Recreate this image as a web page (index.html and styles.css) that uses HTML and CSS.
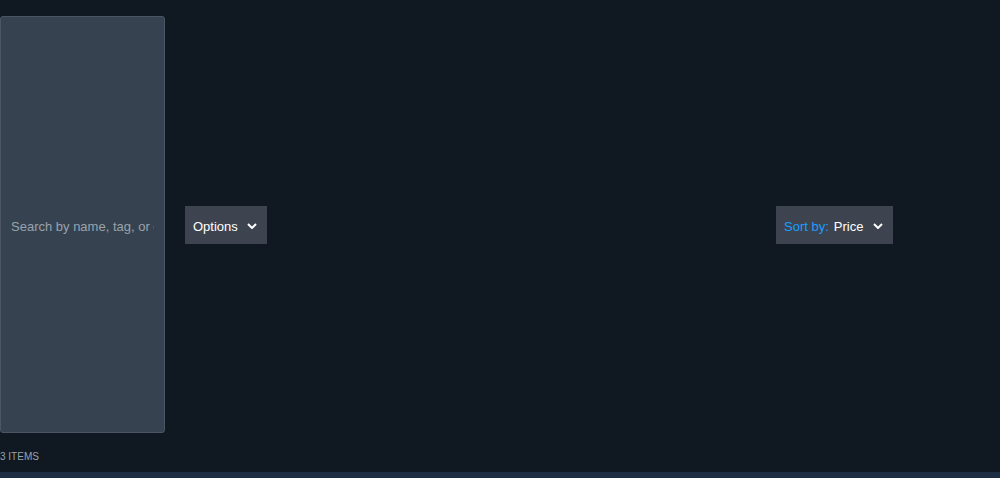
FILE: index.html
```html
<!DOCTYPE html>
<html lang="en">
<head>
    <meta charset="UTF-8">
    <title>Inventory</title>
    <link rel="stylesheet" href="styles.css">
</head>
<body>

<div class="page">
    <!-- Filtros -->
    <div class="toolbar">
        <input type="text" class="search" placeholder="Search by name, tag, or description">
        <button class="dropdown options">
            Options
            <svg class="chevron" viewBox="0 0 10 6" width="10" height="6"><path d="M1 1 L5 5 L9 1" fill="none" stroke="#fff" stroke-width="2"/></svg>
        </button>
        <div class="spacer"></div>
        <button class="dropdown sort">
            <span class="sort-label">Sort by:</span> Price
            <svg class="chevron" viewBox="0 0 10 6" width="10" height="6"><path d="M1 1 L5 5 L9 1" fill="none" stroke="#fff" stroke-width="2"/></svg>
        </button>
    </div>

    <div class="count">3 ITEMS</div>
</div>

<div class="footer-bar"></div>

</body>
</html>
```

FILE: styles.css
```css
html, body {
    height: 100%;
}
body {
    margin: 0;
    background-color: #101822;
    font-family: "Liberation Sans", Arial, sans-serif;
    display: flex;
    flex-direction: column;
    overflow: hidden;
}
.page {
    flex: 1;
    padding-top: 16px;
}
.toolbar {
    display: flex;
    align-items: center;
    height: 417px;
    padding-right: 107px;
}
.search {
    align-self: stretch;
    width: 165px;
    box-sizing: border-box;
    margin: 0;
    padding: 3px 10px 0;
    background-color: #36424f;
    border: 1px solid #4b5665;
    border-radius: 3px;
    color: #c6d4df;
    font-family: inherit;
    font-size: 13px;
    outline: none;
}
.search::placeholder {
    color: #98a3ae;
}
.dropdown {
    display: flex;
    align-items: center;
    height: 38px;
    box-sizing: border-box;
    padding: 3px 8px 0;
    background-color: #3d4450;
    border: none;
    border-radius: 0;
    color: #ffffff;
    font-family: inherit;
    font-size: 13px;
    cursor: pointer;
}
.options {
    margin-left: 20px;
    width: 82px;
}
.sort {
    width: 117px;
}
.sort-label {
    color: #1a9fff;
    margin-right: 5px;
}
.chevron {
    margin-left: auto;
    margin-right: 2px;
}
.spacer {
    flex: 1;
}
.count {
    margin-top: 18px;
    font-size: 10px;
    color: #9aa3ab;
}
.footer-bar {
    height: 6px;
    background-color: #1e2e42;
}
```
